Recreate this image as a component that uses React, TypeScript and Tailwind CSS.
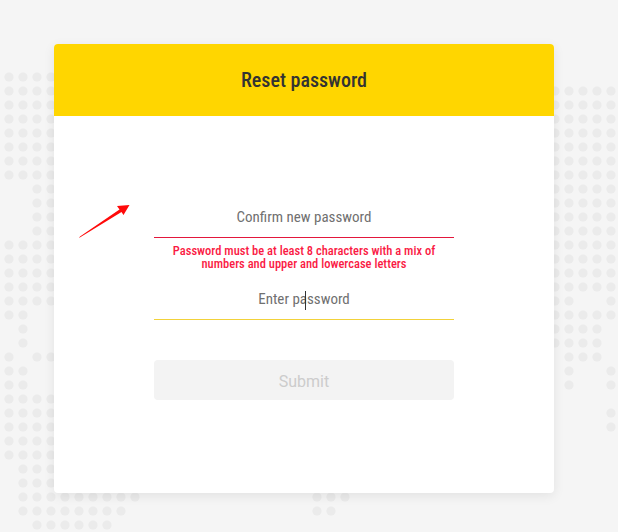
const dotRows: [number, number[]][] = [
  [0, [0, 1, 2, 3]],
  [1, [0, 1, 2, 3, 39, 40, 41, 42, 43]],
  [2, [0, 1, 2, 3, 39, 40, 41, 42, 43]],
  [3, [0, 1, 2, 3, 39, 40, 41, 42, 43]],
  [4, [0, 1, 2, 3, 39, 40, 41, 42, 43]],
  [5, [0, 1, 2, 3, 39, 40, 41, 42, 43]],
  [6, [0, 1, 2, 3, 39, 40, 41, 42, 43]],
  [7, [0, 1, 2, 3, 39, 40, 41, 42, 43]],
  [8, [2, 3, 39, 40, 41, 42, 43]],
  [9, [2, 3, 39, 40, 41, 42, 43]],
  [10, [2, 3, 39, 40, 41, 42, 43]],
  [11, [2, 3, 39, 40, 41, 42, 43]],
  [12, [0, 1, 2, 3, 39, 40, 41, 42, 43]],
  [13, [0, 1, 2, 3, 39, 40, 41, 42, 43]],
  [14, [0, 1, 2, 3, 39, 40, 41, 42, 43]],
  [15, [0, 1, 2, 3, 39, 40, 41, 42, 43]],
  [16, [0, 1, 2, 3, 39, 40, 43]],
  [17, [0, 1, 39, 40, 41, 42, 43]],
  [18, [1, 39, 40, 41, 42]],
  [19, [1, 39, 40, 41, 42]],
  [20, [0, 2, 3, 40, 41, 42]],
  [21, [0, 1, 40, 43]],
  [22, [0, 1, 40, 43]],
  [23, [0, 1, 2, 3]],
  [24, [0, 1, 2, 3, 43]],
  [25, [0, 1, 2, 3, 43]],
  [26, [0, 1, 2, 3]],
  [27, [0, 1, 2, 3]],
  [28, [1, 2, 3]],
  [29, [1, 2, 3]],
  [30, [1, 2, 3, 4, 5, 6, 7, 8, 9, 22, 23, 24]],
  [31, [1, 2, 3, 4, 5, 6, 7, 8, 22, 23]],
  [32, [2, 3, 4, 5, 6, 7]],
];

function DotBackground() {
  return (
    <svg className="absolute inset-0" width="618" height="532" viewBox="0 0 618 532">
      {dotRows.flatMap(([j, cols]) =>
        cols.map((i) => (
          <circle key={`${j}-${i}`} cx={9 + 14 * i} cy={77 + 14 * j} r={4.6} fill="#ebebeb" />
        ))
      )}
    </svg>
  );
}

export default function App() {
  return (
    <div className="relative h-[532px] w-[618px] overflow-hidden bg-[#f5f5f5]">
      <DotBackground />
      <div className="relative ml-[54px] pt-[44px]">
        <div className="flex h-[449px] w-[500px] flex-col overflow-hidden rounded-[4px] bg-white shadow-[0_3px_12px_rgba(0,0,0,0.08)]">
          <div className="flex h-[72px] items-center justify-center bg-[#ffd600]">
            <h1 className="font-['Roboto_Condensed',sans-serif] text-[20px] font-medium text-[#333333]">
              Reset password
            </h1>
          </div>
          <div className="flex flex-col items-center pt-[82px] font-['Roboto_Condensed',sans-serif]">
            <div className="flex h-[40px] w-[300px] items-center justify-center border-b border-[#e3173c] text-[15px] text-[#707070]">
              Confirm new password
            </div>
            <p className="mt-[6px] w-[300px] text-center text-[12.5px] font-medium leading-[13px] text-[#fa1a44]">
              Password must be at least 8 characters with a mix of numbers and upper and lowercase letters
            </p>
            <div className="relative mt-[10px] flex h-[40px] w-[300px] items-center justify-center border-b border-[#f2d23a] text-[15px] text-[#707070]">
              Enter password
              <span className="absolute left-[151px] top-[11px] h-[19px] w-px bg-[#333333]" />
            </div>
            <button
              type="button"
              className="mt-[40px] flex h-[40px] w-[300px] items-center justify-center rounded-[4px] bg-[#f3f3f3] pt-[4px] font-['Roboto',sans-serif] text-[16px] text-[#cccccc]"
            >
              Submit
            </button>
          </div>
        </div>
      </div>
      <svg className="pointer-events-none absolute left-0 top-0" width="618" height="532" viewBox="0 0 618 532">
        <polygon points="79,238 80,236.5 119.5,209.5 117,206 129.5,205 123.5,215 121.5,212" fill="#ff0a0a" />
      </svg>
    </div>
  );
}
